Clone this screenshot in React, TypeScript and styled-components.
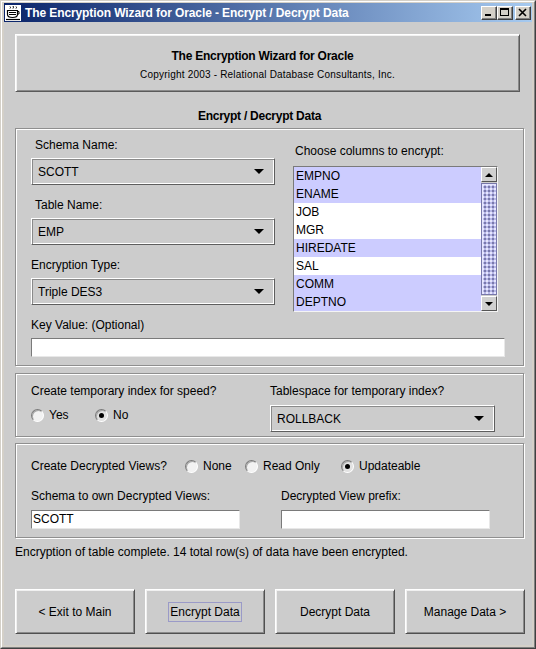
import React from 'react';
import styled, { createGlobalStyle } from 'styled-components';

const Global = createGlobalStyle`
  html, body { margin: 0; padding: 0; background: #cccccc; }
  body { font-family: "Liberation Sans", Arial, sans-serif; font-size: 12px; color: #000; }
  * { box-sizing: border-box; }
`;

const Window = styled.div`
  width: 536px;
  height: 649px;
  border: 1px solid;
  border-color: #d4d0c8 #404040 #404040 #d4d0c8;
  background: #d4d0c8;
  display: flex;
`;

const Frame = styled.div`
  flex: 1;
  border: 1px solid;
  border-color: #fff #808080 #808080 #fff;
  padding: 1px 2px 2px 2px;
  display: flex;
  flex-direction: column;
`;

const Caption = styled.div`
  height: 19px;
  display: flex;
  align-items: center;
  background: linear-gradient(to right, #0a246a 0%, #a6caf0 100%);
  padding: 0 1px 0 1px;
  color: #fff;
  font-weight: bold;
  font-size: 12px;
  letter-spacing: -0.1px;
  flex: none;
`;

const CaptionIcon = styled.svg`
  width: 16px;
  height: 16px;
  flex: none;
  margin-right: 4px;
`;

const CaptionText = styled.span`
  flex: 1;
  white-space: nowrap;
`;

const CaptionButtons = styled.div`
  display: flex;
  align-items: center;
`;

const CaptionButton = styled.div<{ $gap?: number }>`
  width: 16px;
  height: 14px;
  margin-left: ${p => p.$gap ?? 0}px;
  background: #d4d0c8;
  border: 1px solid;
  border-color: #fff #404040 #404040 #fff;
  box-shadow: inset -1px -1px 0 #808080;
  display: flex;
  align-items: center;
  justify-content: center;
`;

const Content = styled.div`
  flex: 1;
  background: #cccccc;
  display: flex;
  flex-direction: column;
  padding: 12px 8px 0 11px;
`;

const HeaderBox = styled.div`
  height: 58px;
  margin-right: 4px;
  border: 1px solid;
  border-color: #fff #5a5a5a #5a5a5a #fff;
  box-shadow: inset 1px 1px 0 #f2f2f2, inset -1px -1px 0 #8a8a8a;
  display: flex;
  flex-direction: column;
  align-items: center;
  padding-top: 14px;
`;

const HeaderTitle = styled.div`
  font-weight: bold;
  font-size: 12px;
  line-height: 14px;
  letter-spacing: -0.25px;
  padding-right: 10px;
`;

const HeaderCopy = styled.div`
  font-size: 10px;
  line-height: 12px;
  letter-spacing: 0.2px;
  margin-top: 6px;
`;

const SectionTitle = styled.div`
  margin: 17px 0 5px;
  line-height: 14px;
  text-align: center;
  font-weight: bold;
  letter-spacing: -0.25px;
  padding-right: 20px;
`;

const Panel = styled.div<{ $h: number; $mt?: number; $pt: number }>`
  height: ${p => p.$h}px;
  margin-top: ${p => p.$mt ?? 0}px;
  border: 1px solid #8f8f8f;
  box-shadow: inset 1px 1px 0 #fff, 1px 1px 0 #fff;
  padding: ${p => p.$pt}px 0 0 15px;
  display: flex;
  flex-direction: column;
`;

const TopRow = styled.div`
  display: flex;
  align-items: flex-start;
`;

const LeftCol = styled.div`
  width: 244px;
  display: flex;
  flex-direction: column;
  gap: 12px;
`;

const RightCol = styled.div`
  width: 205px;
  margin-left: 18px;
  padding-top: 6px;
  display: flex;
  flex-direction: column;
`;

const Group = styled.div<{ $mt?: number }>`
  display: flex;
  flex-direction: column;
  margin-top: ${p => p.$mt ?? 0}px;
`;

const Label = styled.div<{ $indent?: number; $mb?: number }>`
  line-height: 16px;
  white-space: nowrap;
  padding-left: ${p => p.$indent ?? 0}px;
  margin-bottom: ${p => p.$mb ?? 5}px;
`;

const ComboBox = styled.div<{ $w?: number }>`
  height: 27px;
  width: ${p => (p.$w ? `${p.$w}px` : '100%')};
  border: 1px solid;
  border-color: #fff #5e5e5e #5e5e5e #fff;
  box-shadow: inset 1px 1px 0 #8a8a8a, inset -1px -1px 0 #fff;
  display: flex;
  align-items: center;
  padding: 0 10px 0 6px;
`;

const ComboText = styled.span`
  flex: 1;
  padding-top: 1px;
`;

const ArrowDown = styled.span`
  width: 0;
  height: 0;
  border-left: 5px solid transparent;
  border-right: 5px solid transparent;
  border-top: 5px solid #000;
`;

const TextField = styled.div<{ $w?: number }>`
  height: 19px;
  width: ${p => (p.$w ? `${p.$w}px` : '100%')};
  background: #fff;
  border: 1px solid;
  border-color: #7a7a7a #e8e8e8 #e8e8e8 #7a7a7a;
  padding-left: 1px;
  line-height: 17px;
`;

const List = styled.div`
  height: 146px;
  margin-top: 7px;
  border: 1px solid;
  border-color: #7a7a7a #f4f4f4 #f4f4f4 #7a7a7a;
  display: flex;
  background: #fff;
`;

const Rows = styled.div`
  flex: 1;
  display: flex;
  flex-direction: column;
  overflow: hidden;
`;

const Row = styled.div<{ $sel: boolean }>`
  height: 18px;
  flex: none;
  line-height: 18px;
  padding-left: 2px;
  background: ${p => (p.$sel ? '#ccccff' : '#ffffff')};
`;

const ScrollBar = styled.div`
  width: 16px;
  display: flex;
  flex-direction: column;
  background: #cccccc;
`;

const ScrollBtn = styled.div`
  height: 15px;
  flex: none;
  background: #d0d0d0;
  border: 1px solid;
  border-color: #fff #555 #555 #fff;
  display: flex;
  align-items: center;
  justify-content: center;
`;

const ArrowUpSmall = styled.span`
  width: 0;
  height: 0;
  border-left: 4px solid transparent;
  border-right: 4px solid transparent;
  border-bottom: 4px solid #000;
`;

const ArrowDownSmall = styled.span`
  width: 0;
  height: 0;
  border-left: 4px solid transparent;
  border-right: 4px solid transparent;
  border-top: 4px solid #000;
`;

const Thumb = styled.div`
  flex: 1;
  margin: 1px 0;
  border: 1px solid #7777aa;
  background-color: #b8b8e8;
  background-image:
    radial-gradient(circle at 1px 1px, #e8e8ff 0.7px, transparent 0.9px),
    radial-gradient(circle at 3px 3px, #7777aa 0.7px, transparent 0.9px);
  background-size: 4px 4px;
  box-shadow: inset 1px 1px 0 #e6e6ff;
`;

const TwoCol = styled.div<{ $cols: string; $mt?: number }>`
  display: grid;
  grid-template-columns: ${p => p.$cols};
  align-items: start;
  margin-top: ${p => p.$mt ?? 0}px;
`;

const RadioRow = styled.div<{ $mt?: number }>`
  display: flex;
  align-items: center;
  height: 16px;
  margin-top: ${p => p.$mt ?? 0}px;
`;

const RadioItem = styled.label<{ $w?: number }>`
  display: flex;
  align-items: center;
  gap: 5px;
  width: ${p => (p.$w ? `${p.$w}px` : 'auto')};
  white-space: nowrap;
`;

const RadioCircle = styled.span<{ $on?: boolean }>`
  position: relative;
  width: 13px;
  height: 13px;
  flex: none;
  border-radius: 50%;
  border: 1px solid;
  border-color: #7a7a7a #ffffff #ffffff #7a7a7a;
  background: ${p => (p.$on ? '#e2e2e2' : '#f2f2f2')};
  box-shadow: inset 1px 1px 0 #a8a8a8;
  &::after {
    content: '';
    display: ${p => (p.$on ? 'block' : 'none')};
    position: absolute;
    left: 3px;
    top: 3px;
    width: 5px;
    height: 5px;
    border-radius: 50%;
    background: #000;
  }
`;

const RowLabel = styled.span<{ $w: number }>`
  width: ${p => p.$w}px;
  white-space: nowrap;
`;

const Status = styled.div`
  margin-top: 6px;
  line-height: 16px;
  white-space: nowrap;
`;

const ButtonBar = styled.div`
  margin-top: 29px;
  margin-right: -1px;
  display: grid;
  grid-template-columns: repeat(4, 1fr);
  gap: 10px;
`;

const Button = styled.div`
  height: 45px;
  border: 1px solid;
  border-color: #fff #505050 #505050 #fff;
  box-shadow: inset 1px 1px 0 #f0f0f0, inset -1px -1px 0 #8a8a8a;
  display: flex;
  align-items: center;
  justify-content: center;
  white-space: nowrap;
`;

const FocusText = styled.span<{ $focus?: boolean }>`
  padding: 2px 1px;
  line-height: 14px;
  border: 1px solid ${p => (p.$focus ? '#9a9ac8' : 'transparent')};
`;

const Radio = ({ label, on, w }: { label: string; on?: boolean; w?: number }) => (
  <RadioItem $w={w}>
    <RadioCircle $on={on} />
    <span>{label}</span>
  </RadioItem>
);

const Combo = ({ value, w }: { value: string; w?: number }) => (
  <ComboBox $w={w}>
    <ComboText>{value}</ComboText>
    <ArrowDown />
  </ComboBox>
);

const columns: { name: string; sel: boolean }[] = [
  { name: 'EMPNO', sel: true },
  { name: 'ENAME', sel: true },
  { name: 'JOB', sel: false },
  { name: 'MGR', sel: false },
  { name: 'HIREDATE', sel: true },
  { name: 'SAL', sel: false },
  { name: 'COMM', sel: true },
  { name: 'DEPTNO', sel: true },
];

export default function App() {
  return (
    <>
      <Global />
      <Window>
        <Frame>
          <Caption>
            <CaptionIcon viewBox="0 0 16 16">
              <rect x="0" y="0" width="16" height="16" fill="#fff" />
              <path d="M5 1.5 q1 1 0 2 M8 1 q1 1.2 0 2.5 M11 1.5 q1 1 0 2" stroke="#000" strokeWidth="1" fill="none" />
              <path d="M2.5 5.5 h10 v4 q0 3 -5 3 q-5 0 -5 -3 z" stroke="#000" strokeWidth="1.2" fill="#fff" />
              <path d="M12.5 6.5 h1.5 v2.5 h-1.5" stroke="#000" strokeWidth="1" fill="none" />
              <path d="M4 7.5 h7 M4 9.5 h7" stroke="#000" strokeWidth="1" />
              <path d="M1 14.5 h14" stroke="#000" strokeWidth="1.2" />
            </CaptionIcon>
            <CaptionText>The Encryption Wizard for Oracle - Encrypt / Decrypt Data</CaptionText>
            <CaptionButtons>
              <CaptionButton>
                <svg width="10" height="9" viewBox="0 0 10 9">
                  <rect x="1" y="6" width="6" height="2" fill="#000" />
                </svg>
              </CaptionButton>
              <CaptionButton>
                <svg width="10" height="9" viewBox="0 0 10 9">
                  <rect x="0.5" y="0.5" width="8" height="7" fill="none" stroke="#000" />
                  <rect x="0.5" y="1" width="8" height="1" fill="#000" />
                </svg>
              </CaptionButton>
              <CaptionButton $gap={2}>
                <svg width="10" height="9" viewBox="0 0 10 9">
                  <path d="M1 1 L8 8 M8 1 L1 8" stroke="#000" strokeWidth="1.6" />
                </svg>
              </CaptionButton>
            </CaptionButtons>
          </Caption>
          <Content>
            <HeaderBox>
              <HeaderTitle>The Encryption Wizard for Oracle</HeaderTitle>
              <HeaderCopy>Copyright 2003 - Relational Database Consultants, Inc.</HeaderCopy>
            </HeaderBox>
            <SectionTitle>Encrypt / Decrypt Data</SectionTitle>

            <Panel $h={238} $pt={8}>
              <TopRow>
                <LeftCol>
                  <Group>
                    <Label $indent={4}>Schema Name:</Label>
                    <Combo value="SCOTT" />
                  </Group>
                  <Group>
                    <Label $indent={4}>Table Name:</Label>
                    <Combo value="EMP" />
                  </Group>
                  <Group>
                    <Label>Encryption Type:</Label>
                    <Combo value="Triple DES3" />
                  </Group>
                </LeftCol>
                <RightCol>
                  <Label $indent={2} $mb={0}>Choose columns to encrypt:</Label>
                  <List>
                    <Rows>
                      {columns.map(c => (
                        <Row key={c.name} $sel={c.sel}>{c.name}</Row>
                      ))}
                    </Rows>
                    <ScrollBar>
                      <ScrollBtn><ArrowUpSmall /></ScrollBtn>
                      <Thumb />
                      <ScrollBtn><ArrowDownSmall /></ScrollBtn>
                    </ScrollBar>
                  </List>
                </RightCol>
              </TopRow>
              <Group $mt={5}>
                <Label>Key Value: (Optional)</Label>
                <TextField $w={474} />
              </Group>
            </Panel>

            <Panel $h={64} $mt={7} $pt={9}>
              <TwoCol $cols="239px 225px">
                <Group>
                  <Label $mb={0}>Create temporary index for speed?</Label>
                  <RadioRow $mt={8}>
                    <Radio label="Yes" w={64} />
                    <Radio label="No" on />
                  </RadioRow>
                </Group>
                <Group>
                  <Label $mb={6}>Tablespace for temporary index?</Label>
                  <Combo value="ROLLBACK" />
                </Group>
              </TwoCol>
            </Panel>

            <Panel $h={95} $mt={6} $pt={14}>
              <RadioRow>
                <RowLabel $w={154}>Create Decrypted Views?</RowLabel>
                <Radio label="None" w={60} />
                <Radio label="Read Only" w={96} />
                <Radio label="Updateable" on />
              </RadioRow>
              <TwoCol $cols="250px 209px" $mt={14}>
                <Group>
                  <Label $mb={6}>Schema to own Decrypted Views:</Label>
                  <TextField $w={209}>SCOTT</TextField>
                </Group>
                <Group>
                  <Label $mb={6}>Decrypted View prefix:</Label>
                  <TextField $w={209} />
                </Group>
              </TwoCol>
            </Panel>

            <Status>Encryption of table complete. 14 total row(s) of data have been encrypted.</Status>

            <ButtonBar>
              <Button><FocusText>&lt; Exit to Main</FocusText></Button>
              <Button><FocusText $focus>Encrypt Data</FocusText></Button>
              <Button><FocusText>Decrypt Data</FocusText></Button>
              <Button><FocusText>Manage Data &gt;</FocusText></Button>
            </ButtonBar>
          </Content>
        </Frame>
      </Window>
    </>
  );
}
